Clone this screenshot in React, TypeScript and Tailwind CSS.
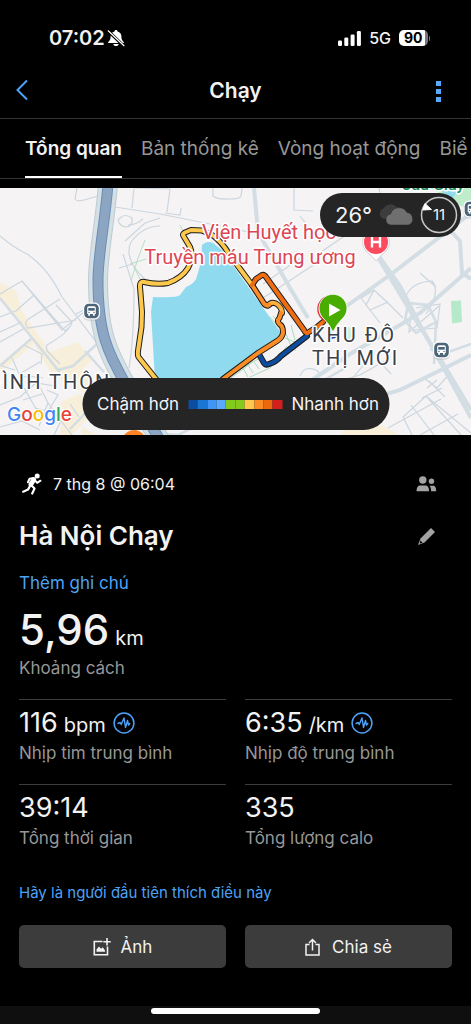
import React, { useState } from 'react';

interface Stat {
  label: string;
  value: string;
  unit?: string;
  hasChart?: boolean;
}

const TABS = ['Tổng quan', 'Bản thống kê', 'Vòng hoạt động', 'Biể'];

const STATS: Stat[] = [
  { label: 'Nhịp tim trung bình', value: '116', unit: 'bpm', hasChart: true },
  { label: 'Nhịp độ trung bình', value: '6:35', unit: '/km', hasChart: true },
  { label: 'Tổng thời gian', value: '39:14' },
  { label: 'Tổng lượng calo', value: '335' },
];

const PACE_COLORS = [
  'bg-[#0c4da2]',
  'bg-[#1976d2]',
  'bg-[#4095f5]',
  'bg-[#59a9ff]',
  'bg-[#84c91e]',
  'bg-[#84c91e]',
  'bg-[#fdc84b]',
  'bg-[#fb8c26]',
  'bg-[#ec680c]',
  'bg-[#d3201f]',
];

const StatusBar: React.FC = () => (
  <div className="flex h-[62px] items-end justify-between pr-[41px] pl-[49px] pb-[12px]">
    <div className="flex items-center gap-[2px]">
      <span className="text-[20px] leading-6 font-semibold">07:02</span>
      <svg width="18" height="18" viewBox="0 0 18 18" fill="none">
        <path d="M9 1C8.100 1 7.500 1.600 7.500 2.400 5 3 3.600 5 3.600 7.500c0 3-.9 4.100-2.300 5.500-.4.4-.2 1.100.4 1.100h14.600c.6 0 .8-.7.4-1.100-1.400-1.400-2.300-2.500-2.300-5.500 0-2.500-1.400-4.500-3.900-5.100C10.500 1.600 9.900 1 9 1z" fill="#fff" />
        <path d="M6.300 14.900h5.400c-.3 1.400-1.300 2.100-2.700 2.100s-2.400-.7-2.700-2.100z" fill="#fff" />
        <path d="M1 1.800 16.600 16.800" stroke="#000" strokeWidth="3" />
        <path d="M1.200 1.800 17 16.700" stroke="#fff" strokeWidth="1.200" strokeLinecap="round" />
      </svg>
    </div>
    <div className="flex h-6 items-center gap-[8px]">
      <svg width="23" height="15" viewBox="0 0 23 15" fill="#fff">
        <rect x="0" y="9.500" width="4" height="5.500" rx="1.200" />
        <rect x="6.300" y="6.500" width="4" height="8.500" rx="1.200" />
        <rect x="12.600" y="3.500" width="4" height="11.500" rx="1.200" />
        <rect x="18.900" y="0" width="4" height="15" rx="1.200" />
      </svg>
      <span className="text-[16px] leading-6 font-medium text-gray-100">5G</span>
      <div className="flex items-center gap-px">
        <div className="flex h-4 w-[29px] items-center rounded-[5px] bg-linear-to-r from-white from-90% to-[#777] to-90% pl-[5px] text-[14px] leading-4 font-bold text-black">90</div>
        <div className="h-[5px] w-px rounded-r bg-[#777]" />
      </div>
    </div>
  </div>
);

const BusStop: React.FC<{ x: number; y: number }> = ({ x, y }) => (
  <g transform={`translate(${x} ${y})`}>
    <rect x="-8.500" y="-8" width="17" height="17.500" rx="5.500" fill="#9aa0a6" opacity=".5" />
    <rect x="-8.500" y="-8.500" width="17" height="17" rx="5.500" fill="#fff" />
    <rect x="-7.300" y="-7.300" width="14.600" height="14.600" rx="4.500" fill="#4d6579" />
    <path d="M-4.300-3.200q0-1.500 1.500-1.500h5.600q1.500 0 1.500 1.500v6.200h-1v1.700h-1.800V3h-3v1.700h-1.800V3h-1z" fill="#fff" />
    <path d="M-3.200-3h6.400v2.700h-6.400z" fill="#4d6579" />
    <circle cx="-2.500" cy="1.400" r=".7" fill="#4d6579" />
    <circle cx="2.500" cy="1.400" r=".7" fill="#4d6579" />
  </g>
);

const YELLOW = 'M156 191 138.500 169 Q137.500 167 138 163 L141.500 139 142 124 140 99 Q139.500 93 144 94 Q157 97 168 95 Q182 90 188 80 Q194 68 190 59 L183.500 48 Q182 46 185 44.500 L191 42 202 42.500 213 47.500 Q222 54 229 66 L252 97';
const ORANGE = 'M252 97 263 114 Q265.500 118.500 269 117 M281 125 279.500 130 Q276 133 280 136.500 Q283 138 283 145 Q282 150 277 153 L258 165 223 191';
const CURVE = 'M268 117.500 Q271 113.500 276 115.500 Q282 119 282 125';
const RED = 'M252 97 256 91 262 87 Q264 86 266 89 L304 142 Q306 147 309 144 L317 139 323 134';
const BLUE = 'M260 168 264 175 Q265.500 177.500 269 176 Q276 174 281 168 L307 148';

const RouteMap: React.FC = () => (
  <svg className="block h-[247px] w-full" viewBox="0 0 471 247" preserveAspectRatio="xMidYMid slice" fontFamily="Roboto, sans-serif">
    <rect width="471" height="247" fill="#f5f3f4" />

    {/* built-up areas */}
    <path d="M0 94 16 103 22 123 50 164 78 154 92 172 82 182 106 211 72 247H60L64 213 88 207 50 184 34 156 0 184V175L32 150 0 112z" fill="#f8efda" />
    <path d="M376 235 400 247H340L352 236z" fill="#faefd8" />
    <path d="M60 214 82 205V247H100L90 244 64 225z" fill="#f8efda" />

    {/* parks */}
    <path d="M430 0h41v22l-12-5-16-10z" fill="#bfeccb" />
    <path d="M438 0h22l-8 11z" fill="#8fdaee" />
    <path d="M451 113 461 112.500 462 134 452 135.500z" fill="#b5e9c9" />
    <path d="M343 141 350 139 353 150 343 153z" fill="#cdf0d8" />
    <path d="M240 181 262 169M250 189 270 180 287 158M231 190 250 176M243 180l5 9M248 177l5 8M254 174l5 7M273 128q6 6 7 12l6 6 5 12 5 5M291 137l4 15M285 150l12 5-8 8-21 14" stroke="#a8dcc0" strokeWidth="1" fill="none" />

    {/* small streets */}
    <g stroke="#cbd6df" strokeWidth="1.200" fill="none">
      <path d="M77 0 75 11Q77 14 84 12L98 8M134 0 132 20M115 19 160 26 235 41 265 48M135 0 170 1 167 24M165 25 180 27 181 20M213 0 213 8Q218 12 230 11 240 11 241 8L242 0M294 0 294 22 313 23M160 30 145 35 125 53M120 30q5-5 12 0 1 8-5 9-7 0-9-7zM128 37q8 0 15-6M160 38q-17 0-29 16-8 18 15 38M123 66l11 35Q134 150 129 180M119 80l14-4" />
      <path d="M0 48Q14 60 27 66 48 80 62 109L97 155 106 163M0 106 22 93 62 142 90 119M22 93l43 50 5-4M17 122 34 107M27 132 60 111M56 117 72 134Q70 144 47 157 45 161 49 165L60 176M27 132q-3 5 1 8L76 132M76 126 89 119M0 129 18 122M0 144 22 134M0 154 25 140M12 170 19 186 40 174M2 178 15 182M24 157 42 166 41 176" />
      <path d="M0 217 20 209 36 195 55 198M10 188 24 200 39 226M23 212 42 206M38 195 48 215 39 238M48 215 61 233 54 247M20 190 28 188 43 190M47 202 58 207 42 233M70 216 79 229M0 239 22 233 40 242M35 220 55 225 72 247" />
      <path d="M361 110 374 102 388 115 403 130M361 110l9 12 18-8M374 102l-8 15 14 18M405 111q5-17 27-18Q441 104 426 126M416 120 440 116 437 140 412 142M412 118l-3 26 14-12 16-14M420 85l16 14M300 188q5-12 18-5 3 12-7 15M345 199q13-15 20-24M377 171l14 15M325 197l35-10 30-17" />
      <path d="M403 229 426 208 471 245M411 217 434 247M426 208l35 39M403 229l9 18M388 240l53-29M420 247l38-21M424 190l13 10 14-16M427 200l10-8M429 193l16 16M442 200l-20 10" />
      <path d="M379 0 383 22 318 66M263 96 305 67M263 110 315 76M300 28 314 46" />
    </g>

    {/* main roads */}
    <g stroke="#d3dde4" fill="none">
      <g strokeWidth="4">
        <path d="M254 0 258 44 290 100 308 130" />
        <path d="M367 51 412 126 444 177 471 222" />
        <path d="M352 30 400 98 419 135 471 230" />
        <path d="M471 80 420 125 400 137 350 166 315 190 280 212" />
        <path d="M437 28 460 53 462 85 471 91" />
        <path d="M330 130 394 84 471 25" />
        <path d="M471 167 445 180 400 202 360 214 340 215" />
      </g>
      <g strokeWidth="2.500">
        <path d="M408 115 428 117 436 134 416 145 405 133zM436 134 434 176" />
        <path d="M0 110 58 182 73 178 98 155M0 178 32 150M85 163 104 184M106 204 70 241M55 179 60 184" />
        <path d="M430 161 446 165 471 156M326 191 347 179" />
        <path d="M152 245 178 247 202 235M165 247 148 230" />
      </g>
    </g>

    {/* river */}
    <g fill="none">
      <path d="M108-4C105 35 98 66 98 92 98 145 108 165 125 195L160 252" stroke="#bdccd4" strokeWidth="20" />
      <path d="M108-4C105 35 98 66 98 92 98 145 108 165 125 195L160 252" stroke="#d5e0e5" strokeWidth="18" />
      <path d="M108-4C105 35 98 66 98 92 98 145 108 165 125 195L160 252" stroke="#6c8fb5" strokeWidth="11" />
      <path d="M108-4C105 35 98 66 98 92 98 145 108 165 125 195L160 252" stroke="#8ca5c2" strokeWidth="9" />
    </g>
    <path d="M131 93 138 70 145 52M130 76 146 71M134 79l6 12M180 37 192 60M270 129l10 12" stroke="#b8dfc8" fill="none" />

    {/* lake */}
    <path d="M153 109Q178 110 180 107L186 99Q196 95 197 88L201 74 202 57Q207 52 213 55L222 62 281 145 276 151 223 191H155L151 124Z" fill="#8fdaee" />

    {/* route, coloured by pace */}
    <g fill="none" strokeLinejoin="round" strokeLinecap="round">
      <path d={YELLOW} stroke="#1c1c1c" strokeWidth="6" />
      <path d={ORANGE} stroke="#1c1c1c" strokeWidth="6" />
      <path d={CURVE} stroke="#1c1c1c" strokeWidth="6" />
      <path d={BLUE} stroke="#1c1c1c" strokeWidth="6" />
      <path d={RED} stroke="#1c1c1c" strokeWidth="6" />
      <path d={BLUE} stroke="#0c4da2" strokeWidth="4" />
      <path d={YELLOW} stroke="#fdc84b" strokeWidth="4" />
      <path d={CURVE} stroke="#fdb040" strokeWidth="4" />
      <path d={ORANGE} stroke="#fb8c26" strokeWidth="4" />
      <path d={RED} stroke="#ee6c12" strokeWidth="4" />
      <path d="M331 149l4-1" stroke="#0c4da2" strokeWidth="4" />
    </g>

    <BusStop x={91.500} y={123} />
    <BusStop x={441.500} y={162} />
    <BusStop x={472} y={21} />

    {/* hospital pin */}
    <path d="M376 73Q373 69 366 63A13.500 13.500 0 1 1 386 63Q379 69 376 73z" fill="#fff" stroke="#c9c9c9" strokeWidth=".8" />
    <circle cx="376" cy="54" r="12" fill="#fb4b5e" />
    <path d="M372 48.500v11M380 48.500v11M372 54h8" stroke="#fff" strokeWidth="2.400" fill="none" />

    {/* place names */}
    <g stroke="#fff" strokeWidth="3" strokeLinejoin="round" paintOrder="stroke">
      <g fill="#dc4655" fontSize="20" textAnchor="middle">
        <text x="269" y="51">Viện Huyết học</text>
        <text x="250" y="76">Truyền máu Trung ương</text>
      </g>
      <g fill="#3a3f48" fontSize="20" letterSpacing="2">
        <text x="312" y="154">KHU ĐÔ</text>
        <text x="312" y="177">THỊ MỚI</text>
        <text x="-13" y="201">ĐÌNH THÔN</text>
      </g>
      <text x="401" y="2" fill="#16875a" fontSize="16" fontWeight="500">Cầu Giấy</text>
    </g>

    {/* finish and start pins */}
    <circle cx="331" cy="121" r="13" fill="#fff" stroke="#e02d3c" strokeWidth="1.500" />
    <path d="M333 144Q330 137 324 131A14 14 0 1 1 342 131Q336 137 333 144z" fill="#48ad00" stroke="#fff" strokeWidth=".8" />
    <path d="M329 115.500v13l11.500-6.500z" fill="#fff" />

    <circle cx="134" cy="254" r="12" fill="#ff8426" />

    <text x="7" y="233" fontSize="19" fontWeight="500" fontFamily="Inter, sans-serif" stroke="#fff" strokeWidth="2" paintOrder="stroke">
      <tspan fill="#4285f4">G</tspan>
      <tspan fill="#ea4335">o</tspan>
      <tspan fill="#fbbc05">o</tspan>
      <tspan fill="#4285f4">g</tspan>
      <tspan fill="#34a853">l</tspan>
      <tspan fill="#ea4335">e</tspan>
    </text>
  </svg>
);

const WeatherBadge: React.FC = () => (
  <div className="absolute top-[5px] right-[10px] flex h-11 w-[141px] items-center justify-between rounded-full bg-[#252525] pr-[3px] pl-[15px]">
    <span className="text-[22px] leading-6 text-gray-100">26°</span>
    <svg width="37" height="22" viewBox="0 0 37 22">
      <path d="M6 15A5.500 5.500 0 0 1 5.500 4.500 8 8 0 0 1 18.500 3 6.500 6.500 0 0 1 22 15z" fill="#3d3d3d" />
      <path d="M12.500 21A5.600 5.600 0 0 1 12.500 10 9 9 0 0 1 29 8.500 6.500 6.500 0 0 1 30.500 21z" fill="#6f6f6f" stroke="#252525" strokeWidth=".5" />
    </svg>
    <div className="relative flex size-[38px] items-center justify-center">
      <svg className="absolute inset-0" width="38" height="38" viewBox="0 0 38 38">
        <circle cx="19" cy="19" r="17.500" stroke="#c6c6c6" strokeWidth="1.500" fill="none" />
        <path d="M5 7.500 11.500 13.500 3 14z" fill="#fff" stroke="#fff" strokeWidth="1" />
      </svg>
      <span className="text-[15px] leading-4 text-gray-100">11</span>
    </div>
  </div>
);

const PaceLegend: React.FC = () => (
  <div className="absolute bottom-[5px] left-1/2 flex h-[52px] w-[307px] -translate-x-1/2 items-center justify-between rounded-full bg-[#252525] pr-[10px] pl-[15px] text-[17px] leading-6 whitespace-nowrap text-gray-100">
    <span>Chậm hơn</span>
    <div className="flex h-[9px] w-[94px]">
      {PACE_COLORS.map((color, i) => (
        <div key={i} className={`flex-1 ${color}`} />
      ))}
    </div>
    <span>Nhanh hơn</span>
  </div>
);

const ChartIcon: React.FC = () => (
  <svg width="22" height="22" viewBox="0 0 22 22" fill="none" stroke="#4da3f7" strokeLinejoin="round" strokeLinecap="round">
    <circle cx="11" cy="11" r="9.900" strokeWidth="1.500" />
    <path d="M5 11.500 7.200 10.500 8.200 12.500 11 6 12.500 15.500 14.500 8.500 15.500 13 16.800 11.500" strokeWidth="1.400" />
  </svg>
);

const RunnerIcon: React.FC = () => (
  <svg width="20" height="22" viewBox="0 0 20 22" fill="none" stroke="#fff" strokeLinecap="round" strokeLinejoin="round">
    <circle cx="15.200" cy="2.900" r="2.500" fill="#fff" stroke="none" />
    <path d="M11.800 6.600 8.800 11.600" strokeWidth="4.800" />
    <path d="M11.500 5.100 7.600 5.800 5.900 9.300M13 7.500 15.200 9.800 18.500 7.700" strokeWidth="2" />
    <path d="M9.800 12.800 12.500 15.600 10.200 20.500M8 13 6 16.600 1.200 18.700" strokeWidth="2.200" />
  </svg>
);

const App: React.FC = () => {
  const [activeTab, setActiveTab] = useState(TABS[0]);

  return (
    <div className="flex min-h-screen flex-col overflow-hidden bg-black font-[Inter,sans-serif] text-[#f2f2f2]">
      <StatusBar />

      {/* Header */}
      <header className="grid h-[57px] grid-cols-3 items-center border-b border-[#353535] px-[15px]">
        <button aria-label="Quay lại" className="justify-self-start">
          <svg width="14" height="22" viewBox="0 0 14 22" fill="none" stroke="#4da3f7" strokeWidth="2">
            <path d="M12 1.500 2.500 11 12 20.500" />
          </svg>
        </button>
        <h1 className="pt-[2px] text-center text-[21px] leading-7 font-semibold">Chạy</h1>
        <button aria-label="Tùy chọn" className="flex flex-col gap-[3px] justify-self-end pt-[2px] pr-[15px]">
          <span className="size-[5px] bg-[#59a9ff]" />
          <span className="size-[5px] bg-[#59a9ff]" />
          <span className="size-[5px] bg-[#59a9ff]" />
        </button>
      </header>

      {/* Tabs */}
      <nav className="flex h-[60px] gap-[19px] overflow-hidden border-b border-[#353535] pl-[25px]">
        {TABS.map((tab) => (
          <button
            key={tab}
            onClick={() => setActiveTab(tab)}
            className={`shrink-0 border-b-2 pt-[2px] text-[19px] leading-6 whitespace-nowrap ${
              activeTab === tab ? 'border-white font-semibold' : 'border-transparent text-[#979797]'
            }`}
          >
            {tab}
          </button>
        ))}
      </nav>

      {/* Map */}
      <section className="relative mt-[9px]">
        <RouteMap />
        <WeatherBadge />
        <PaceLegend />
      </section>

      <main className="px-[19px] pt-[37px]">
        <div className="flex h-6 items-center justify-between">
          <div className="flex items-center gap-[11px] pl-[3px]">
            <RunnerIcon />
            <span className="text-[16px] leading-6">7 thg 8 @ 06:04</span>
          </div>
          <button aria-label="Quyền riêng tư" className="pr-[15px]">
            <svg width="21" height="16" viewBox="0 0 21 16" fill="#a3a3a3">
              <circle cx="6.800" cy="4" r="3.700" />
              <circle cx="15.500" cy="5.200" r="2.700" />
              <path d="M.5 15.200C.5 11.500 2 9.500 4 9.500h5.600c2 0 3.500 2 3.500 5.700z" />
              <path d="M13.500 9.700h3.700c1.800 0 3 1.800 3 5.500h-5.100c0-2.700-.4-4.300-1.600-5.500z" />
            </svg>
          </button>
        </div>

        <div className="mt-[22px] flex h-9 items-center justify-between">
          <h2 className="text-[26px] leading-9 font-semibold">Hà Nội Chạy</h2>
          <button aria-label="Sửa tên" className="pr-[16px]">
            <svg width="19" height="19" viewBox="0 0 19 19" fill="#a3a3a3">
              <path d="M14 1 18 5 7.500 15.500 1 18 3.500 11.500z" />
              <path d="M3.300 13.500 5.600 15.700 2.800 16.500z" fill="#000" />
            </svg>
          </button>
        </div>

        <a href="#note" className="mt-[17px] block text-[17px] leading-6 text-[#4da3f7]">Thêm ghi chú</a>

        <div className="mt-[9px]">
          <p className="flex items-baseline gap-[6px] text-[42px] leading-[52px] font-medium">
            5,96
            <span className="text-[20px] leading-6 font-normal">km</span>
          </p>
          <p className="text-[17px] leading-6 text-[#979797]">Khoảng cách</p>
        </div>

        <div className="mt-[19px] grid grid-cols-2 gap-x-[19px]">
          {STATS.map((stat) => (
            <div key={stat.label} className="h-[85px] border-t border-[#3c3c3c] pt-[5px]">
              <div className="flex items-center gap-[7px]">
                <p className="flex items-baseline gap-[6px] text-[27px] leading-9">
                  {stat.value}
                  {stat.unit && <span className="text-[20px] leading-6">{stat.unit}</span>}
                </p>
                {stat.hasChart && <ChartIcon />}
              </div>
              <p className="text-[17px] leading-6 text-[#979797]">{stat.label}</p>
            </div>
          ))}
        </div>

        <a href="#like" className="mt-[12px] block text-[15px] leading-6 text-[#4da3f7]">Hãy là người đầu tiên thích điều này</a>

        <div className="mt-[20px] grid grid-cols-2 gap-[19px] text-[17px] leading-6">
          <button className="flex h-[43px] items-center justify-center gap-[10px] rounded-[5px] bg-[#3c3c3c]">
            <svg width="18" height="18" viewBox="0 0 18 18" fill="none" stroke="#f2f2f2" strokeWidth="1.600">
              <path d="M9.500 3.500H1.300V16.700H14.500V8.500" />
              <path d="M14 0v7.400M10.300 3.700h7.400" />
              <path d="M3.500 13.800V11.500L6 8.500 8 10.800 9.800 9.300 12 12.500V13.800z" fill="#f2f2f2" stroke="none" />
            </svg>
            Ảnh
          </button>
          <button className="flex h-[43px] items-center justify-center gap-[12px] rounded-[5px] bg-[#3c3c3c]">
            <svg width="15" height="18" viewBox="0 0 15 18" fill="none" stroke="#f2f2f2" strokeWidth="1.500">
              <path d="M4.500 6.500H1V17H14V6.500H10.500M7.500 12.500V2M4 5 7.500 1.500 11 5" />
            </svg>
            Chia sẻ
          </button>
        </div>
      </main>

      <footer className="mt-auto flex h-[18px] justify-center bg-[#0f0f0f] pt-[2px]">
        <div className="h-[6px] w-[169px] rounded-full bg-white" />
      </footer>
    </div>
  );
};

export default App;
